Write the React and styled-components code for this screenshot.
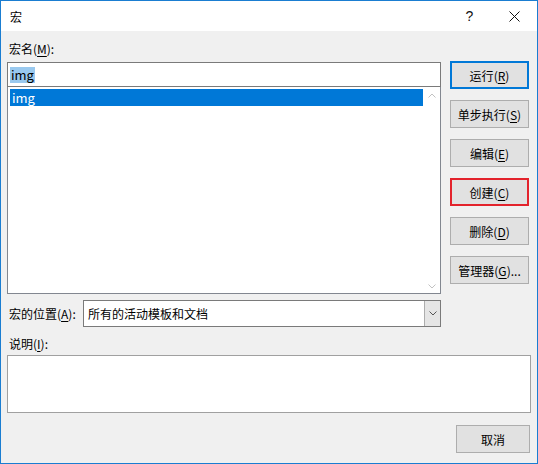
import React from 'react';
import styled, { createGlobalStyle } from 'styled-components';

const GlobalStyle = createGlobalStyle`
  html, body {
    margin: 0;
    padding: 0;
    background: #f0f0f0;
  }
  * { box-sizing: border-box; }
`;

const Window = styled.div`
  width: 538px;
  height: 464px;
  border: 1px solid #1a7dd1;
  background: #f0f0f0;
  display: flex;
  flex-direction: column;
  font-family: "Noto Sans CJK SC", "Noto Sans", sans-serif;
  font-size: 12px;
  color: #000;
`;

const TitleBar = styled.div`
  height: 30px;
  background: #fff;
  display: flex;
  align-items: center;
  padding-left: 9px;
  flex-shrink: 0;
`;

const Title = styled.span`
  flex: 1;
  font-size: 12px;
`;

const TitleButton = styled.span`
  width: 45px;
  height: 30px;
  display: flex;
  align-items: center;
  justify-content: center;
  font-family: "Liberation Sans", sans-serif;
  font-size: 14px;
  color: #111;
`;

const Body = styled.div`
  flex: 1;
  padding: 8px 6px 0 6px;
  display: flex;
  flex-direction: column;
`;

const MainRow = styled.div`
  display: flex;
  gap: 9px;
`;

const LeftCol = styled.div`
  width: 434px;
  display: flex;
  flex-direction: column;
`;

const Label = styled.div`
  height: 20px;
  line-height: 20px;
  padding-left: 2px;
  margin-bottom: ${p => p.$gap || 0}px;
  white-space: nowrap;
`;

const Key = styled.span`
  text-decoration: underline;
  text-underline-offset: 2px;
`;

const TextInput = styled.div`
  height: 25px;
  background: #fff;
  border: 1px solid #7a7a7a;
  display: flex;
  align-items: center;
  padding-left: 2px;
  font-size: 13px;
`;

const Selected = styled.span`
  background: #99c9ef;
  padding: 0 1px;
  line-height: 16px;
`;

const ListBox = styled.div`
  height: 207px;
  background: #fff;
  border: 1px solid #828790;
  border-top: none;
  display: flex;
  padding: 2px 0 0 2px;
`;

const ListItems = styled.div`
  flex: 1;
`;

const ListItem = styled.div`
  height: 17px;
  line-height: 17px;
  padding-left: 2px;
  font-size: 13px;
  background: ${p => (p.$active ? '#0078d7' : 'transparent')};
  color: ${p => (p.$active ? '#fff' : '#000')};
`;

const ScrollBar = styled.div`
  width: 17px;
  margin-top: -2px;
  display: flex;
  flex-direction: column;
  justify-content: space-between;
  align-items: center;
  padding: 6px 0 4px;
`;

const ButtonCol = styled.div`
  width: 79px;
  margin-top: 22px;
  display: flex;
  flex-direction: column;
  gap: 11px;
`;

const Button = styled.div`
  height: 28px;
  width: ${p => p.$width || 79}px;
  background: #e1e1e1;
  border: ${p => (p.$default ? '2px solid #0078d7' : p.$marked ? '2px solid #e3232c' : '1px solid #adadad')};
  display: flex;
  align-items: center;
  justify-content: center;
  white-space: nowrap;
`;

const ComboRow = styled.div`
  display: flex;
  align-items: center;
  margin-top: 6px;
  width: 434px;
`;

const ComboLabel = styled.div`
  width: 76px;
  padding-left: 2px;
  white-space: nowrap;
`;

const Combo = styled.div`
  flex: 1;
  height: 27px;
  background: #fff;
  border: 1px solid #7a7a7a;
  display: flex;
  align-items: stretch;
`;

const ComboText = styled.div`
  flex: 1;
  display: flex;
  align-items: center;
  padding-left: 4px;
`;

const ComboArrow = styled.div`
  width: 16px;
  background: #e5e5e5;
  border-left: 1px solid #adadad;
  display: flex;
  align-items: center;
  justify-content: center;
`;

const DescLabel = styled(Label)`
  margin-top: 7px;
`;

const DescBox = styled.div`
  width: 524px;
  height: 58px;
  background: #fff;
  border: 1px solid #a0a0a0;
  margin-top: 1px;
`;

const Footer = styled.div`
  display: flex;
  justify-content: flex-end;
  padding-right: 1px;
  margin-top: 12px;
`;

const Chevron = ({ up, color = '#c2c2c2' }) => (
  <svg width="8" height="5" viewBox="0 0 8 5">
    <path
      d={up ? 'M0.5 4.5 L4 1 L7.5 4.5' : 'M0.5 0.5 L4 4 L7.5 0.5'}
      fill="none"
      stroke={color}
      strokeWidth="1"
    />
  </svg>
);

const CloseIcon = () => (
  <svg width="11" height="11" viewBox="0 0 11 11">
    <path d="M0.5 0.5 L10.5 10.5 M10.5 0.5 L0.5 10.5" stroke="#111" strokeWidth="1" />
  </svg>
);

const buttons = [
  { text: '运行', key: 'R', $default: true },
  { text: '单步执行', key: 'S' },
  { text: '编辑', key: 'E' },
  { text: '创建', key: 'C', $marked: true },
  { text: '删除', key: 'D' },
  { text: '管理器', key: 'G', tail: '...' },
];

export default function App() {
  return (
    <>
      <GlobalStyle />
      <Window>
        <TitleBar>
          <Title>宏</Title>
          <TitleButton>?</TitleButton>
          <TitleButton><CloseIcon /></TitleButton>
        </TitleBar>
        <Body>
          <MainRow>
            <LeftCol>
              <Label $gap={3}>宏名(<Key>M</Key>):</Label>
              <TextInput><Selected>img</Selected></TextInput>
              <ListBox>
                <ListItems>
                  <ListItem $active>img</ListItem>
                </ListItems>
                <ScrollBar>
                  <Chevron up />
                  <Chevron />
                </ScrollBar>
              </ListBox>
            </LeftCol>
            <ButtonCol>
              {buttons.map(b => (
                <Button key={b.key} $default={b.$default} $marked={b.$marked}>
                  {b.text}(<Key>{b.key}</Key>){b.tail}
                </Button>
              ))}
            </ButtonCol>
          </MainRow>
          <ComboRow>
            <ComboLabel>宏的位置(<Key>A</Key>):</ComboLabel>
            <Combo>
              <ComboText>所有的活动模板和文档</ComboText>
              <ComboArrow><Chevron color="#555" /></ComboArrow>
            </Combo>
          </ComboRow>
          <DescLabel>说明(<Key>I</Key>):</DescLabel>
          <DescBox />
          <Footer>
            <Button $width={74}>取消</Button>
          </Footer>
        </Body>
      </Window>
    </>
  );
}
